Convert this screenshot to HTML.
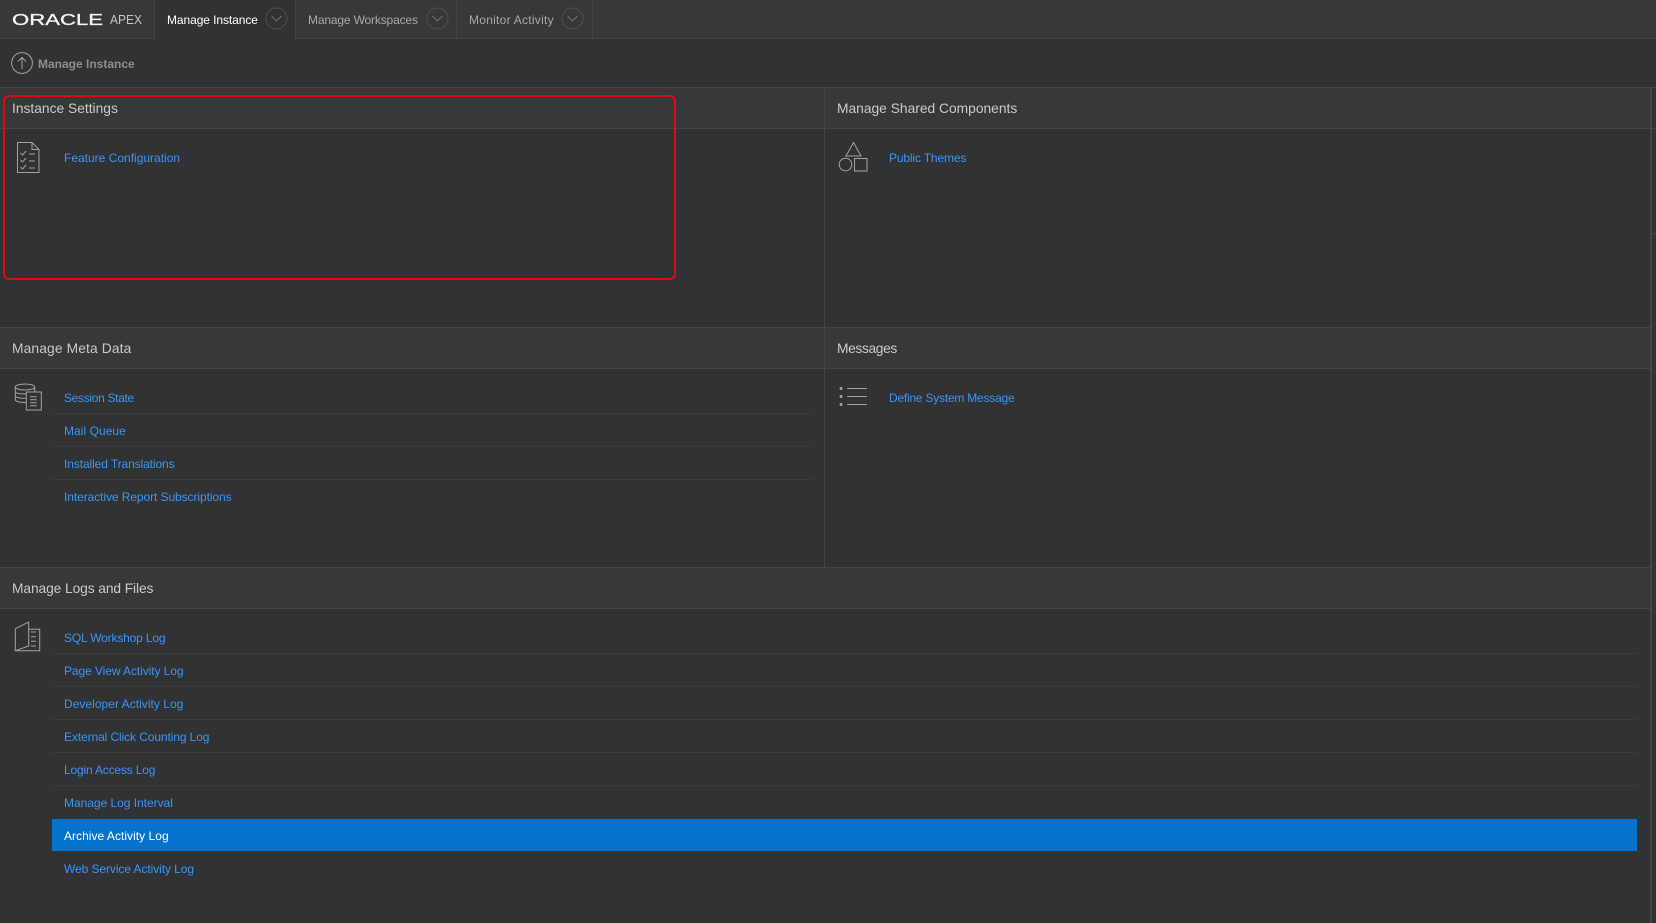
<!DOCTYPE html>
<html><head><meta charset="utf-8"><style>
html,body{margin:0;padding:0;width:1656px;height:923px;overflow:hidden;background:#313234;font-family:"Liberation Sans",sans-serif}
#r{position:relative;width:1656px;height:923px;overflow:hidden}
#r div,#r a,#r svg{position:absolute;white-space:nowrap}
.h{background:#37383a}
.l{background:#434446}
.s{background:#3a3b3d;height:1px}
.t{font-size:12px;line-height:20px;top:10px;color:#a8a9aa}
.g{font-size:13.8px;line-height:20px;color:#c9cacb;left:12px}
.k{font-size:12px;line-height:18px;color:#3a96f5;left:64px;text-decoration:none}
svg{fill:none;stroke:#a2a3a5;stroke-width:1.2}
</style></head><body><div id="r">
<div class="h" style="left:0;top:0;width:1656px;height:38px"></div>
<div class="l" style="left:0;top:38px;width:155px;height:1px"></div>
<div class="l" style="left:296px;top:38px;width:1360px;height:1px"></div>
<div style="left:155px;top:0;width:141px;height:39px;background:#313234"></div>
<div class="l" style="left:154px;top:0;width:1px;height:39px"></div>
<div class="l" style="left:295px;top:0;width:1px;height:39px"></div>
<div class="l" style="left:456px;top:0;width:1px;height:38px"></div>
<div class="l" style="left:592px;top:0;width:1px;height:38px"></div>

<svg style="left:0;top:0;stroke:none" width="155" height="38"><text x="12" y="24.800" font-family="Liberation Sans" font-size="15.500" fill="#f4f4f4" textLength="91" lengthAdjust="spacingAndGlyphs" stroke="#f4f4f4" stroke-width=".3">ORACLE</text><text x="110" y="24" font-family="Liberation Sans" font-size="13" fill="#c4c5c6" textLength="32" lengthAdjust="spacingAndGlyphs">APEX</text></svg>

<div class="t" style="left:167px;color:#fff;letter-spacing:-.08px">Manage Instance</div>
<div class="t" style="left:308px;letter-spacing:-.16px">Manage Workspaces</div>
<div class="t" style="left:469px;letter-spacing:.26px">Monitor Activity</div>
<svg style="left:265px;top:7px;stroke:#4e4f51;stroke-width:1" width="23" height="23"><circle cx="11.5" cy="11.5" r="10.500"/><path d="M6.500 9l5 5 5-5" stroke="#6f7072"/></svg>
<svg style="left:426px;top:7px;stroke:#4e4f51;stroke-width:1" width="23" height="23"><circle cx="11.5" cy="11.5" r="10.500"/><path d="M6.500 9l5 5 5-5" stroke="#6f7072"/></svg>
<svg style="left:561px;top:7px;stroke:#4e4f51;stroke-width:1" width="23" height="23"><circle cx="11.5" cy="11.5" r="10.500"/><path d="M6.500 9l5 5 5-5" stroke="#6f7072"/></svg>

<svg style="left:11px;top:52px;stroke:#a2a3a5;stroke-width:1" width="23" height="23"><circle cx="11" cy="11" r="10.400"/><path d="M11 17V5.500M7 9.500l4-4 4 4"/></svg>
<div style="left:38px;top:54px;font-size:12px;line-height:20px;font-weight:bold;color:#8c8e91">Manage Instance</div>

<div class="h" style="left:0;top:88px;width:1650px;height:40px"></div>
<div class="h" style="left:0;top:328px;width:1650px;height:40px"></div>
<div class="h" style="left:0;top:568px;width:1649px;height:40px"></div>
<div class="l" style="left:0;top:87px;width:1656px;height:1px"></div>
<div class="l" style="left:0;top:128px;width:1656px;height:1px"></div>
<div class="l" style="left:0;top:327px;width:1650px;height:1px"></div>
<div class="l" style="left:0;top:368px;width:1650px;height:1px"></div>
<div class="l" style="left:0;top:567px;width:1650px;height:1px"></div>
<div class="l" style="left:0;top:608px;width:1650px;height:1px"></div>
<div class="l" style="left:824px;top:88px;width:1px;height:480px"></div>
<div class="l" style="left:1650px;top:88px;width:2px;height:835px"></div>
<div class="l" style="left:1652px;top:233px;width:4px;height:1px"></div>

<div class="g" style="top:99px">Instance Settings</div>
<div class="g" style="top:99px;left:837px">Manage Shared Components</div>
<div class="g" style="top:339px;letter-spacing:.13px">Manage Meta Data</div>
<div class="g" style="top:339px;left:837px;letter-spacing:-.37px">Messages</div>
<div class="g" style="top:579px;letter-spacing:-.1px">Manage Logs and Files</div>

<svg style="left:16px;top:141px;stroke-width:1" width="25" height="33"><path d="M1.500 1.500H16L23 8.500V31.500H1.500ZM16 1.500V8.500H23"/><path d="M4.500 12l2 2 3.500-4M13 13h6M4.500 19l2 2 3.500-4M13 20h6M4.500 26l2 2 3.500-4M13 27h6"/></svg>
<a class="k" style="top:149px">Feature Configuration</a>

<svg style="left:838px;top:141px;stroke-width:1" width="31" height="32"><path d="M15.500 1.500L23 15H8Z"/><circle cx="7.500" cy="23.500" r="6.300"/><rect x="16.500" y="17.500" width="12.500" height="12.500"/></svg>
<a class="k" style="top:149px;left:889px;letter-spacing:-.15px">Public Themes</a>

<svg style="left:14px;top:383px;stroke-width:1" width="29" height="28"><ellipse cx="11" cy="4" rx="9.700" ry="3"/><path d="M1.300 4V16.500C1.300 18.500 6 19.500 12 19.500M20.700 4V9M1.300 8.500C1.300 10.500 6 11 12 11M1.300 12.500C1.300 14.500 6 15.300 12 15.300"/><rect x="12.300" y="9" width="15" height="18"/><path d="M16 13.700h6.700M16 16.700h6.700M16 19.700h6.700M16 22.700h6.700"/></svg>
<a class="k" style="top:389px;letter-spacing:-.32px">Session State</a><div class="s" style="left:52px;top:413px;width:760px"></div>
<a class="k" style="top:422px;letter-spacing:.05px">Mail Queue</a><div class="s" style="left:52px;top:446px;width:760px"></div>
<a class="k" style="top:455px;letter-spacing:-.1px">Installed Translations</a><div class="s" style="left:52px;top:479px;width:760px"></div>
<a class="k" style="top:488px;letter-spacing:-.08px">Interactive Report Subscriptions</a>

<svg style="left:838px;top:384px;stroke-width:1" width="31" height="24"><path d="M9 4.500h20M9 12.500h20M9 20.500h20"/><path d="M3 4.500h.1M3 12.500h.1M3 20.500h.1" stroke-width="3" stroke-linecap="round"/></svg>
<a class="k" style="top:389px;left:889px;letter-spacing:-.22px">Define System Message</a>

<svg style="left:14px;top:621px;stroke-width:1" width="28" height="32"><path d="M1.300 7.700L14.700 1V25L1.300 29.700ZM14.700 8.300H25.700V29.700H1.300"/><path d="M17 11h5M17 15.700h5M17 20.200h5M17 25h5"/></svg>
<a class="k" style="top:629px;letter-spacing:-.17px">SQL Workshop Log</a><div class="s" style="left:52px;top:653px;width:1585px"></div>
<a class="k" style="top:662px;letter-spacing:-.08px">Page View Activity Log</a><div class="s" style="left:52px;top:686px;width:1585px"></div>
<a class="k" style="top:695px;letter-spacing:.03px">Developer Activity Log</a><div class="s" style="left:52px;top:719px;width:1585px"></div>
<a class="k" style="top:728px;letter-spacing:-.1px">External Click Counting Log</a><div class="s" style="left:52px;top:752px;width:1585px"></div>
<a class="k" style="top:761px;letter-spacing:-.18px">Login Access Log</a><div class="s" style="left:52px;top:785px;width:1585px"></div>
<a class="k" style="top:794px;letter-spacing:-.03px">Manage Log Interval</a>
<div style="left:52px;top:819px;width:1585px;height:32px;background:#0572ce"></div>
<a class="k" style="top:827px;color:#fff;letter-spacing:.03px">Archive Activity Log</a>
<a class="k" style="top:860px;letter-spacing:-.08px">Web Service Activity Log</a>

<div style="left:3px;top:95px;width:669px;height:181px;border:2px solid #e2090f;border-radius:6px"></div>
</div></body></html>
